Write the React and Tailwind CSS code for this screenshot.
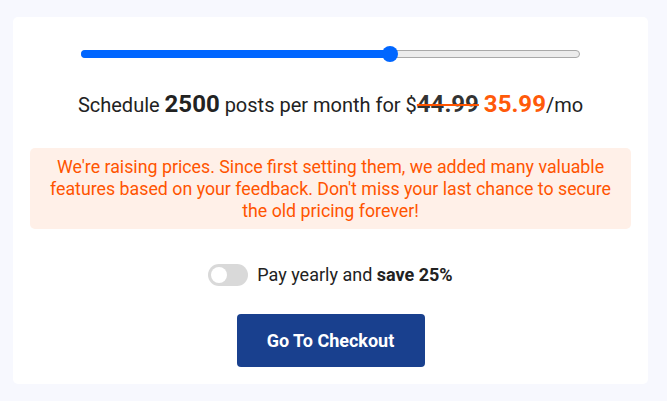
import React, { useState } from 'react';

export default function App() {
  const [yearly, setYearly] = useState(false);
  const percent = 62;

  return (
    <div className="min-h-[401px] w-full bg-[#f7f8fe] pt-[17px] px-[13px] pb-[18px]" style={{ fontFamily: 'Roboto, "Noto Sans", sans-serif' }}>
      <div className="bg-white rounded-[5px] w-[635px] px-[17px] pt-[30px] pb-[17px] flex flex-col items-center">
        <div className="relative w-[499px] h-[14px] flex items-center">
          <div className="w-full h-[8px] rounded-full bg-[#ececec] border border-[#a9a9a9]" />
          <div className="absolute left-0 top-[3px] h-[8px] rounded-full bg-[#0066ff]" style={{ width: `${percent}%` }} />
          <div className="absolute top-[-1px] w-[16px] h-[16px] rounded-full bg-[#0066ff] -ml-[8px]" style={{ left: `${percent}%` }} />
        </div>

        <p className="mt-[29px] text-[20px] leading-[28px] text-[#222]">
          Schedule <span className="font-bold text-[24px]">2500</span> posts per month for $
          <span className="font-bold text-[24px] line-through decoration-[#ff5400] decoration-2 text-[#333]">44.99</span>{' '}
          <span className="font-bold text-[24px] text-[#ff5a0a]">35.99</span>/mo
        </p>

        <div className="mt-[29px] w-full h-[81px] flex items-center justify-center bg-[#fff0e8] rounded-[5px] px-[8px] text-center text-[17.8px] leading-[22px] text-[#ff5400] whitespace-nowrap">
          <p>
            We're raising prices. Since first setting them, we added many valuable
            <br />
            features based on your feedback. Don't miss your last chance to secure
            <br />
            the old pricing forever!
          </p>
        </div>

        <div className="mt-[35px] flex items-center gap-[9px]">
          <button
            onClick={() => setYearly(!yearly)}
            className={`relative w-[40px] h-[22px] rounded-full ${yearly ? 'bg-[#0066ff]' : 'bg-[#d9d9d9]'}`}
          >
            <span className={`absolute top-[3px] w-[16px] h-[16px] rounded-full bg-white ${yearly ? 'left-[21px]' : 'left-[3px]'}`} />
          </button>
          <span className="text-[18px] leading-[22px] text-[#222]">
            Pay yearly and <span className="font-bold">save 25%</span>
          </span>
        </div>

        <button className="mt-[28px] w-[188px] h-[53px] rounded-[4px] bg-[#19408e] text-white font-bold text-[18px]">
          Go To Checkout
        </button>
      </div>
    </div>
  );
}
